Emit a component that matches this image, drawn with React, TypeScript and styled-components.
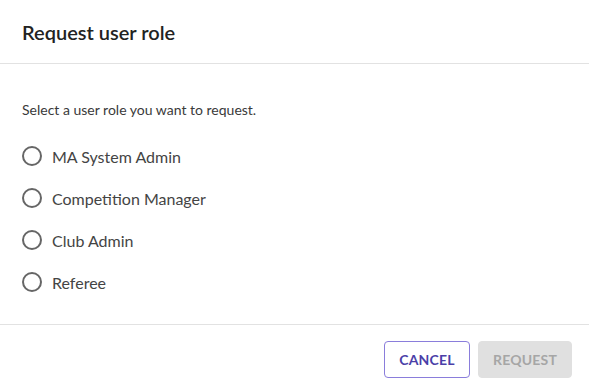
import styled, { createGlobalStyle } from "styled-components";
import { useState } from "react";

const GlobalStyle = createGlobalStyle`
  body {
    margin: 0;
    background: #ffffff;
    font-family: Lato, "Open Sans", sans-serif;
  }
`;

const Dialog = styled.div`
  width: 589px;
  height: 389px;
  display: flex;
  flex-direction: column;
  background: #fff;
  overflow: hidden;
`;

const Header = styled.div`
  height: 63px;
  display: flex;
  align-items: center;
  padding: 0 22px;
  border-bottom: 1px solid #e2e2e2;
`;

const Title = styled.h2`
  margin: 0;
  font-size: 20px;
  font-weight: 600;
  color: #222;
`;

const Content = styled.div`
  flex: 1;
  display: flex;
  flex-direction: column;
  padding: 36px 22px 20px;
  border-bottom: 1px solid #e2e2e2;
`;

const Hint = styled.p`
  margin: 0 0 15px;
  font-size: 14px;
  line-height: 20px;
  color: #3a3a3a;
`;

const Option = styled.label`
  height: 42px;
  display: flex;
  align-items: center;
  gap: 10px;
  cursor: pointer;
`;

const Circle = styled.span<{ $checked: boolean }>`
  width: 20px;
  height: 20px;
  box-sizing: border-box;
  border: 2px solid ${(p) => (p.$checked ? "#4b3fa8" : "#666")};
  border-radius: 50%;
  display: flex;
  align-items: center;
  justify-content: center;

  &::after {
    content: "";
    width: 10px;
    height: 10px;
    border-radius: 50%;
    background: #4b3fa8;
    display: ${(p) => (p.$checked ? "block" : "none")};
  }
`;

const Label = styled.span`
  font-size: 16px;
  color: #444;
`;

const Footer = styled.div`
  height: 64px;
  display: flex;
  justify-content: flex-end;
  align-items: flex-start;
  gap: 8px;
  padding: 16px 17px 0 0;
  box-sizing: border-box;
`;

const Button = styled.button<{ $variant: "outline" | "disabled" }>`
  height: 37px;
  width: ${(p) => (p.$variant === "outline" ? "86px" : "94px")};
  padding: 0;
  border-radius: 4px;
  font-family: Lato, sans-serif;
  font-size: 14px;
  font-weight: 700;
  letter-spacing: 0.2px;
  text-transform: uppercase;
  border: 1px solid ${(p) => (p.$variant === "outline" ? "#8a7ddb" : "#e0e0e0")};
  background: ${(p) => (p.$variant === "outline" ? "#fff" : "#e0e0e0")};
  color: ${(p) => (p.$variant === "outline" ? "#4b3fa8" : "#a6a6a6")};
`;

const roles = ["MA System Admin", "Competition Manager", "Club Admin", "Referee"];

const App = () => {
  const [selected, setSelected] = useState<string | null>(null);

  return (
    <Dialog>
      <GlobalStyle />
      <Header>
        <Title>Request user role</Title>
      </Header>
      <Content>
        <Hint>Select a user role you want to request.</Hint>
        {roles.map((role) => (
          <Option key={role} onClick={() => setSelected(role)}>
            <Circle $checked={selected === role} />
            <Label>{role}</Label>
          </Option>
        ))}
      </Content>
      <Footer>
        <Button $variant="outline">Cancel</Button>
        <Button $variant="disabled" disabled>
          Request
        </Button>
      </Footer>
    </Dialog>
  );
};

export default App;
